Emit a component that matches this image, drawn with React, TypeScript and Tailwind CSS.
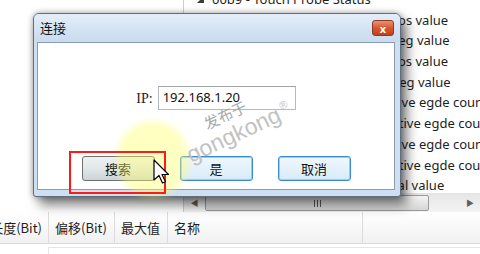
const treeRows = [
  '60BA - Touch probe pos1 pos value',
  '60BB - Touch probe pos1 neg value',
  '60BC - Touch probe pos2 pos value',
  '60BD - Touch probe pos2 neg value',
  '60D5 - Touch probe 1 positive egde counter',
  '60D6 - Touch probe 1 negative egde counter',
  '60D7 - Touch probe 2 positive egde counter',
  '60D8 - Touch probe 2 negative egde counter',
  '60F4 - Following error actual value',
];

function ScrollBar() {
  return (
    <div className="h-[19px] flex items-stretch bg-gradient-to-b from-[#e6e6e6] to-[#f4f4f4] border-t border-[#e2e2e2]">
      <div className="w-[21px] flex items-center justify-center text-[8px] text-[#606060]">◀</div>
      <div className="w-[224px] my-[1px] rounded-[2px] border border-[#9a9a9a] bg-gradient-to-b from-[#f4f4f4] to-[#d6d6d6] flex items-center justify-center gap-[2px]">
        <span className="w-px h-[7px] bg-[#5a5a5a]" />
        <span className="w-px h-[7px] bg-[#5a5a5a]" />
        <span className="w-px h-[7px] bg-[#5a5a5a]" />
      </div>
      <div className="flex-1" />
      <div className="w-[20px] flex items-center justify-center text-[8px] text-[#606060]">▶</div>
    </div>
  );
}

function Dialog() {
  return (
    <div className="absolute left-[33px] top-[13px] w-[368px] h-[184px] flex flex-col rounded-t-[6px] rounded-b-[3px] border border-[#5f6f80] bg-[#cddff0] shadow-[0_0_6px_rgba(0,0,0,0.35),6px_8px_12px_rgba(0,0,0,0.5)]">
      <div className="h-[28px] flex items-center justify-between pl-[6px] pr-[6px] rounded-t-[5px] bg-gradient-to-b from-[#e3eef9] to-[#c8dbef]">
        <span className="text-[13px] text-[#111] font-['Noto_Sans_CJK_SC',sans-serif]">连接</span>
        <div className="w-[22px] h-[16px] rounded-[3px] border border-[#8a3a26] bg-gradient-to-b from-[#ee9070] via-[#d8562e] to-[#c4401a] flex items-center justify-center text-white text-[11px] font-bold leading-none">
          x
        </div>
      </div>
      <div className="flex-1 ml-[3px] mr-[5px] mb-[6px] border border-[#8b9db2] bg-white flex flex-col items-center pt-[43px]">
        <div className="flex items-center gap-[5px] h-[24px]">
          <span className="font-['Liberation_Serif',serif] text-[14px] text-[#222]">IP:</span>
          <div className="w-[138px] h-[24px] border border-[#b5b8bf] border-t-[#a0a3aa] flex items-center pl-[4px] text-[13px] text-[#111] font-['Noto_Sans',sans-serif]">
            192.168.1.20
          </div>
        </div>
        <div className="flex gap-[25px] mt-[46px] text-[13px] text-[#111] font-['Noto_Sans_CJK_SC',sans-serif]">
          <div className="w-[73px] h-[25px] rounded-[3px] border border-[#707070] bg-gradient-to-b from-[#eef1f2] via-[#e2e7e9] to-[#cbd4d8] flex items-center justify-center">
            搜索
          </div>
          <div className="w-[73px] h-[25px] rounded-[3px] border border-[#3a8cce] bg-gradient-to-b from-[#f0f8fd] to-[#d8ebf8] shadow-[inset_0_0_0_1px_#8fd0f6] flex items-center justify-center">
            是
          </div>
          <div className="w-[73px] h-[25px] rounded-[3px] border border-[#3a8cce] bg-gradient-to-b from-[#f0f8fd] to-[#d8ebf8] shadow-[inset_0_0_0_1px_#8fd0f6] flex items-center justify-center">
            取消
          </div>
        </div>
      </div>
    </div>
  );
}

export default function App() {
  return (
    <div className="relative w-[480px] h-[254px] overflow-hidden bg-white text-[13px] text-[#1e1e1e] font-['Noto_Sans','Noto_Sans_CJK_SC',sans-serif]">
      <div className="flex h-[212px]">
        <div className="w-[183px] shrink-0" />
        <div className="flex-1 min-w-0 flex flex-col border-l border-[#cfcfcf]">
          <div className="flex-1 overflow-hidden whitespace-nowrap">
            <div className="-mt-[11px]">
              <div className="h-[20.7px] leading-[20.7px] flex items-center pl-[13px] gap-[8px]">
                <svg width="7" height="7" viewBox="0 0 7 7">
                  <path d="M7 0 L7 7 L0 7 Z" fill="#3c3c3c" />
                </svg>
                <span>00b9 - Touch Probe Status</span>
              </div>
              {treeRows.map((t) => (
                <div key={t} className="h-[20.7px] leading-[20.7px] pl-[51px]">
                  {t}
                </div>
              ))}
            </div>
          </div>
          <ScrollBar />
        </div>
      </div>

      <div className="h-[32px] flex items-stretch bg-gradient-to-b from-[#ffffff] to-[#f1f1f1] border-b border-[#dadada] whitespace-nowrap font-['Noto_Sans_CJK_SC',sans-serif]">
        <div className="w-[49px] overflow-hidden flex items-center justify-end pr-[6px] border-r border-[#dcdcdc]">长度(Bit)</div>
        <div className="w-[66px] flex items-center pl-[6px] border-r border-[#dcdcdc]">偏移(Bit)</div>
        <div className="w-[53px] flex items-center pl-[6px] border-r border-[#dcdcdc]">最大值</div>
        <div className="w-[195px] flex items-center pl-[6px] border-r border-[#dcdcdc]">名称</div>
        <div className="flex-1" />
      </div>
      <div className="ml-[48px] mt-[3px] h-[20px] border-l border-t border-[#e6e6e6]" />

      <Dialog />

      <div className="absolute left-[117px] top-[121px] w-[72px] h-[76px] rounded-full bg-[#ffff66]/40 blur-[3px]" />
      <div className="absolute left-[69px] top-[151px] w-[97px] h-[43px] border-2 border-[#ff1a1a]" />
      <svg className="absolute left-[153px] top-[159px]" width="17" height="26" viewBox="0 0 17 26">
        <path d="M1 1 L1 21 L6 16.5 L9.5 24 L12.5 22.8 L9 15.5 L15.5 15.5 Z" fill="#ffffff" stroke="#000" strokeWidth="1.2" strokeLinejoin="round" />
      </svg>

      <div className="absolute left-[201px] top-[107px] w-[48px] flex justify-center -rotate-[25deg] text-[15px] leading-none text-[#a8a8a8] font-['Noto_Sans_CJK_SC',sans-serif] pointer-events-none">
        发布于
      </div>
      <div className="absolute left-[180px] top-[121px] w-[118px] h-[24px] flex justify-center items-start -rotate-[25deg] text-[23px] leading-none text-[#c2c2c2] font-['Liberation_Sans',sans-serif] pointer-events-none">
        gongkong<span className="text-[11px] ml-[3px]">®</span>
      </div>
    </div>
  );
}
